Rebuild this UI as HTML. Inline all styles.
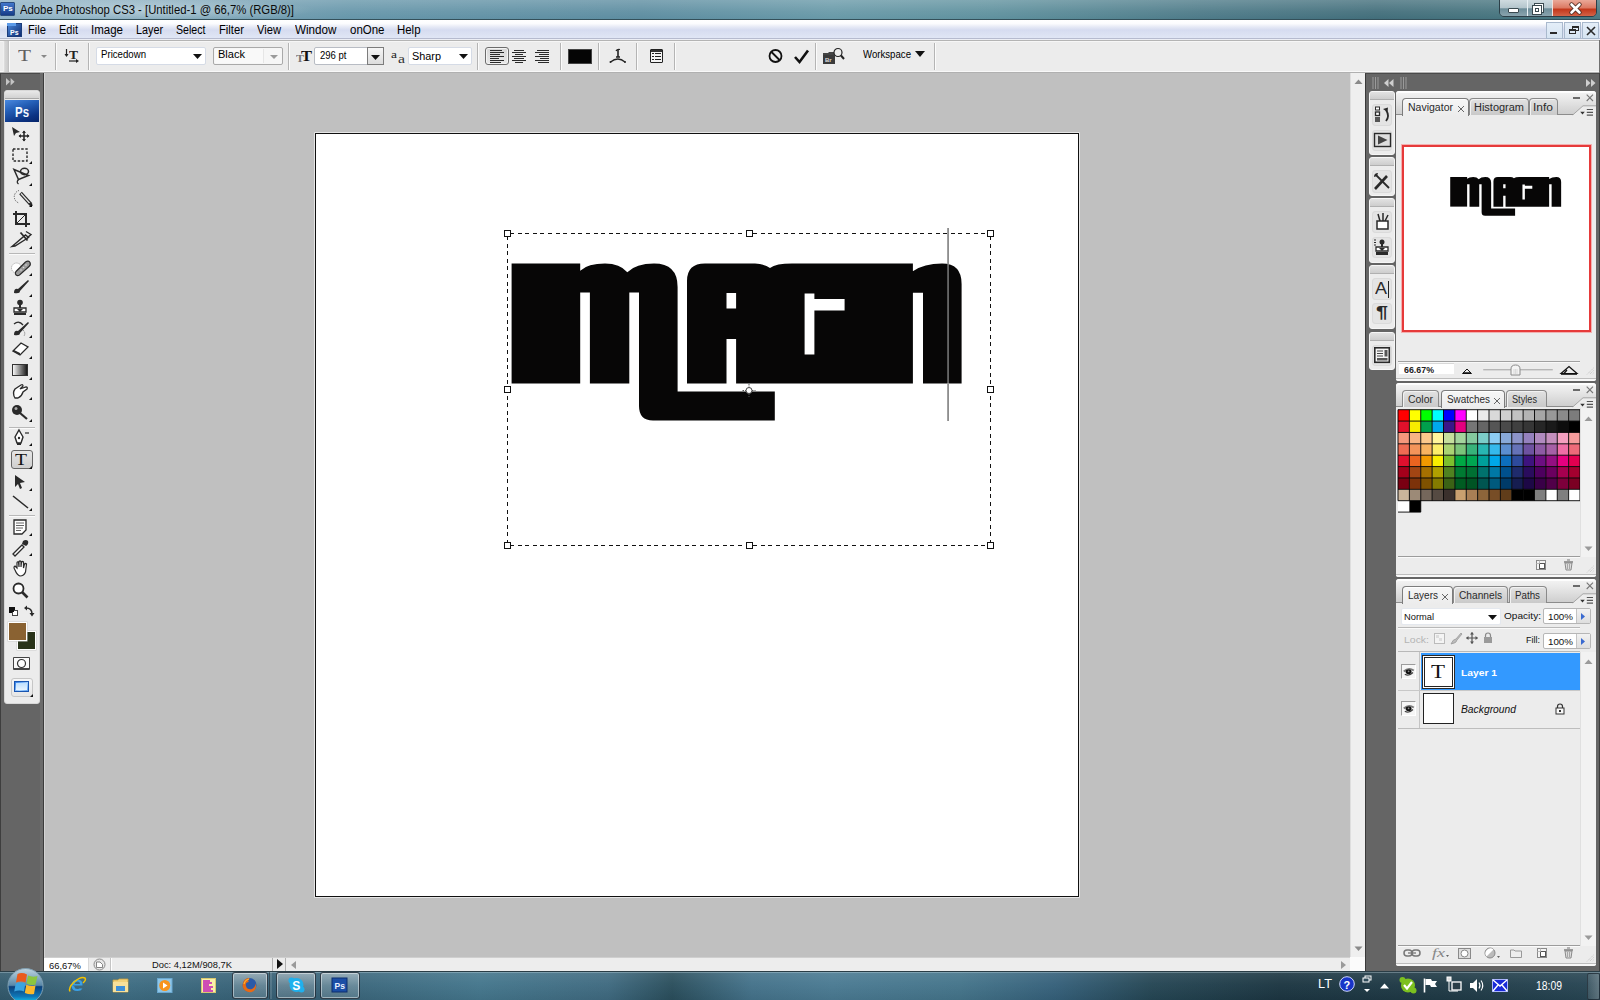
<!DOCTYPE html><html><head><meta charset="utf-8"><style>
*{margin:0;padding:0;box-sizing:border-box}
html,body{width:1600px;height:1000px;overflow:hidden;background:#c0c0c0;font-family:"Liberation Sans",sans-serif;position:relative}
.a{position:absolute}
.t{position:absolute;white-space:nowrap;line-height:1;color:#000}
svg{position:absolute;overflow:visible}
</style></head><body>
<div class="a" style="left:0px;top:0px;width:1600px;height:20px;background:linear-gradient(90deg,#8fb2c5 0%,#7ea5b8 10%,#6394a8 22%,#5a8b9f 40%,#6597a6 52%,#5c8f9c 62%,#4a7886 75%,#3e6b78 86%,#46767f 100%)"></div>
<div class="a" style="left:0px;top:0px;width:1600px;height:19px;background:linear-gradient(rgba(255,255,255,0.22),rgba(255,255,255,0.08) 60%,rgba(255,255,255,0.02))"></div>
<div class="a" style="left:0px;top:0px;width:320px;height:19px;background:radial-gradient(ellipse 160px 12px at 155px 10px,rgba(235,245,250,0.45),rgba(235,245,250,0) 100%)"></div>
<div class="a" style="left:0px;top:19px;width:1600px;height:1px;background:#34505a"></div>
<div class="a" style="left:0px;top:2px;width:15px;height:14px;background:linear-gradient(#4277cc,#163c88);border:1px solid #2a4c80;border-radius:1px"></div>
<div class="t" style="left:3px;top:5px;font-size:8px;color:#fff;font-weight:bold;">Ps</div>
<div class="t" style="left:20px;top:4px;font-size:12.5px;color:#0a0a0a;transform:scaleX(0.9039);transform-origin:0 0;">Adobe Photoshop CS3 - [Untitled-1 @ 66,7% (RGB/8)]</div>
<div class="a" style="left:1499px;top:-1px;width:98px;height:18px;border:1px solid #2c3f48;border-radius:0 0 5px 5px;overflow:hidden;"><div class="a" style="left:0;top:0;width:27px;height:17px;background:linear-gradient(#cfdbe0,#b5c6cd 45%,#6d8d99 52%,#8ea7b1)"></div><div class="a" style="left:27px;top:0;width:1px;height:17px;background:#e8f0f4"></div><div class="a" style="left:28px;top:0;width:24px;height:17px;background:linear-gradient(#cfdbe0,#b5c6cd 45%,#6d8d99 52%,#8ea7b1)"></div><div class="a" style="left:52px;top:0;width:1px;height:17px;background:#f0e0dc"></div><div class="a" style="left:53px;top:0;width:45px;height:17px;background:linear-gradient(#eaa898,#dc7a64 45%,#c3381c 55%,#d66a4e)"></div><div class="a" style="left:8px;top:8px;width:11px;height:5px;background:#fff;border:1px solid #3a4a50;border-radius:1px"></div><div class="a" style="left:34px;top:3px;width:10px;height:10px;background:#fff;border:1px solid #3a4a50"></div><div class="a" style="left:36px;top:5px;width:6px;height:6px;background:#3a4a50;border:1px solid #fff;outline:1px solid #fff"></div><div class="a" style="left:32px;top:5px;width:10px;height:10px;background:#fff;border:1px solid #3a4a50"></div><div class="a" style="left:35px;top:8px;width:4px;height:4px;border:1px solid #3a4a50"></div></div>
<svg style="left:1568px;top:2px" width="16" height="13"><path d="M3.5 2.5 L11.5 10.5 M11.5 2.5 L3.5 10.5" stroke="#4a2a20" stroke-width="4.4" stroke-linecap="round"/><path d="M3.5 2.5 L11.5 10.5 M11.5 2.5 L3.5 10.5" stroke="#fff" stroke-width="2.6" stroke-linecap="round"/></svg>
<div class="a" style="left:0px;top:20px;width:1600px;height:18px;background:linear-gradient(#ffffff 0%,#fbfcfe 20%,#e4e8f5 40%,#d6dcf0 55%,#e0e6f5 100%)"></div>
<div class="a" style="left:0px;top:38px;width:1600px;height:1px;background:#b6bbcf"></div>
<div class="a" style="left:0px;top:39px;width:1600px;height:1px;background:#eceef5"></div>
<div class="a" style="left:7px;top:23px;width:15px;height:14px;background:linear-gradient(135deg,#4a86d8,#0e2c72);border:1px solid #1b3c7a"></div>
<div class="a" style="left:7px;top:23px;width:9px;height:3px;background:#5c9ae8"></div>
<div class="t" style="left:10px;top:29px;font-size:7px;color:#fff;font-weight:bold;">Ps</div>
<div class="t" style="left:28px;top:24px;font-size:12px;color:#000;transform:scaleX(0.9305);transform-origin:0 0;">File</div>
<div class="t" style="left:59px;top:24px;font-size:12px;color:#000;transform:scaleX(0.9184);transform-origin:0 0;">Edit</div>
<div class="t" style="left:91px;top:24px;font-size:12px;color:#000;transform:scaleX(0.9593);transform-origin:0 0;">Image</div>
<div class="t" style="left:136px;top:24px;font-size:12px;color:#000;transform:scaleX(0.8991);transform-origin:0 0;">Layer</div>
<div class="t" style="left:176px;top:24px;font-size:12px;color:#000;transform:scaleX(0.8843);transform-origin:0 0;">Select</div>
<div class="t" style="left:219px;top:24px;font-size:12px;color:#000;transform:scaleX(0.9373);transform-origin:0 0;">Filter</div>
<div class="t" style="left:257px;top:24px;font-size:12px;color:#000;transform:scaleX(0.9303);transform-origin:0 0;">View</div>
<div class="t" style="left:294.5px;top:24px;font-size:12px;color:#000;transform:scaleX(0.9722);transform-origin:0 0;">Window</div>
<div class="t" style="left:349.5px;top:24px;font-size:12px;color:#000;transform:scaleX(0.9575);transform-origin:0 0;">onOne</div>
<div class="t" style="left:397px;top:24px;font-size:12px;color:#000;transform:scaleX(0.9519);transform-origin:0 0;">Help</div>
<div class="a" style="left:1546px;top:22px;width:17px;height:17px;background:linear-gradient(#e4eef8,#d6e4f2);border:1px solid #a9b9cd"></div>
<div class="a" style="left:1564px;top:22px;width:17px;height:17px;background:linear-gradient(#e4eef8,#d6e4f2);border:1px solid #a9b9cd"></div>
<div class="a" style="left:1582px;top:22px;width:17px;height:17px;background:linear-gradient(#e4eef8,#d6e4f2);border:1px solid #a9b9cd"></div>
<div class="a" style="left:1550px;top:32px;width:7px;height:2px;background:#2a2a2a"></div>
<div class="a" style="left:1569px;top:29px;width:7px;height:5px;border:1px solid #2a2a2a;border-top-width:2px;background:#dde8f4"></div>
<div class="a" style="left:1572px;top:26px;width:7px;height:5px;border:1px solid #2a2a2a;border-top-width:2px"></div>
<svg style="left:1586px;top:26px" width="10" height="10"><path d="M1 1 L9 9 M9 1 L1 9" stroke="#2a2a2a" stroke-width="1.6"/></svg>
<div class="a" style="left:0px;top:40px;width:1600px;height:33px;background:#ececec"></div>
<div class="a" style="left:0px;top:40px;width:1600px;height:1px;background:#b4b4b4"></div>
<div class="a" style="left:0px;top:41px;width:1600px;height:1px;background:#f6f6f6"></div>
<div class="a" style="left:0px;top:71px;width:1600px;height:1px;background:#f8f8f8"></div>
<div class="a" style="left:0px;top:72px;width:1600px;height:1px;background:#b0b0b0"></div>
<div class="a" style="left:1599px;top:40px;width:1px;height:33px;background:#707070"></div>
<div class="a" style="left:3px;top:41px;width:6px;height:31px;background:linear-gradient(90deg,#fafafa,#d6d6d6 30%,#d0d0d0 70%,#bdbdbd)"></div>
<div class="a" style="left:9px;top:41px;width:1px;height:31px;background:#fbfbfb"></div>
<div class="a" style="left:55px;top:43px;width:1px;height:27px;background:#b4b4b4;box-shadow:1px 0 0 #fbfbfb"></div>
<div class="a" style="left:88px;top:43px;width:1px;height:27px;background:#b4b4b4;box-shadow:1px 0 0 #fbfbfb"></div>
<div class="a" style="left:288px;top:43px;width:1px;height:27px;background:#b4b4b4;box-shadow:1px 0 0 #fbfbfb"></div>
<div class="a" style="left:477px;top:43px;width:1px;height:27px;background:#b4b4b4;box-shadow:1px 0 0 #fbfbfb"></div>
<div class="a" style="left:560px;top:43px;width:1px;height:27px;background:#b4b4b4;box-shadow:1px 0 0 #fbfbfb"></div>
<div class="a" style="left:598px;top:43px;width:1px;height:27px;background:#b4b4b4;box-shadow:1px 0 0 #fbfbfb"></div>
<div class="a" style="left:636px;top:43px;width:1px;height:27px;background:#b4b4b4;box-shadow:1px 0 0 #fbfbfb"></div>
<div class="a" style="left:674px;top:43px;width:1px;height:27px;background:#b4b4b4;box-shadow:1px 0 0 #fbfbfb"></div>
<div class="a" style="left:815px;top:43px;width:1px;height:27px;background:#b4b4b4;box-shadow:1px 0 0 #fbfbfb"></div>
<div class="a" style="left:934px;top:43px;width:1px;height:27px;background:#b4b4b4;box-shadow:1px 0 0 #fbfbfb"></div>
<div class="t" style="left:18px;top:47px;font-size:17px;color:#606060;font-family:'Liberation Serif',serif;transform:scaleX(1.2511);transform-origin:0 0;">T</div>
<svg style="left:41px;top:55px" width="6" height="4"><path d="M0 0 L6 0 L3 3Z" fill="#888"/></svg>
<div class="t" style="left:69px;top:48px;font-size:13px;color:#222;font-family:'Liberation Serif',serif;font-weight:bold;transform:scaleX(1.0378);transform-origin:0 0;">T</div>
<svg style="left:64px;top:48px" width="16" height="16"><path d="M2.5 1 V8" stroke="#222" stroke-width="1.2"/><path d="M0.5 6 L2.5 9 L4.5 6Z" fill="#222"/><path d="M5 13 H13" stroke="#222" stroke-width="1.2"/><path d="M12 11 L15 13 L12 15Z" fill="#222"/></svg>
<div class="a" style="left:96px;top:47px;width:110px;height:18px;background:#fff;border:1px solid #d5dbe6;border-radius:2px"></div>
<div class="t" style="left:101px;top:50px;font-size:10px;color:#000;transform:scaleX(0.9635);transform-origin:0 0;">Pricedown</div>
<svg style="left:193px;top:54px" width="9" height="5"><path d="M0 0 H9 L4.5 5Z" fill="#111"/></svg>
<div class="a" style="left:213px;top:47px;width:70px;height:18px;background:#f6f6f6;border:1px solid #a9a9a9;border-radius:2px"></div>
<div class="a" style="left:215px;top:49px;width:49px;height:14px;background:#f9f9f9;border-right:1px solid #e6e6e6"></div>
<div class="t" style="left:218px;top:50px;font-size:10px;color:#000;transform:scaleX(1.1042);transform-origin:0 0;">Black</div>
<svg style="left:270px;top:55px" width="8" height="4"><path d="M0 0 H8 L4 4Z" fill="#9a9a9a"/></svg>
<div class="t" style="left:296px;top:53px;font-size:11px;color:#777;font-family:'Liberation Serif',serif;font-weight:bold;transform:scaleX(1.0894);transform-origin:0 0;">T</div>
<div class="t" style="left:301px;top:49px;font-size:15px;color:#111;font-family:'Liberation Serif',serif;font-weight:bold;transform:scaleX(1.0983);transform-origin:0 0;">T</div>
<div class="a" style="left:314px;top:47px;width:70px;height:18px;background:#fff;border:1px solid #b8bcc4;border-radius:2px"></div>
<div class="a" style="left:367px;top:47px;width:17px;height:18px;background:linear-gradient(#f6f6f6,#dcdcdc);border:1px solid #7c7c7c"></div>
<div class="t" style="left:320px;top:50.5px;font-size:10px;color:#000;transform:scaleX(0.9528);transform-origin:0 0;">296 pt</div>
<svg style="left:371px;top:55px" width="9" height="5"><path d="M0 0 H9 L4.5 5Z" fill="#111"/></svg>
<div class="t" style="left:391px;top:49px;font-size:11px;color:#222;font-family:'Liberation Serif',serif;transform:scaleX(1.2268);transform-origin:0 0;">a</div>
<div class="t" style="left:398px;top:53px;font-size:12px;color:#333;font-family:'Liberation Serif',serif;transform:scaleX(1.3138);transform-origin:0 0;">a</div>
<div class="a" style="left:408px;top:47px;width:64px;height:18px;background:#fff;border:1px solid #d5dbe6;border-radius:2px"></div>
<div class="t" style="left:412px;top:51.5px;font-size:10px;color:#000;transform:scaleX(1.0867);transform-origin:0 0;">Sharp</div>
<svg style="left:459px;top:54px" width="9" height="5"><path d="M0 0 H9 L4.5 5Z" fill="#111"/></svg>
<div class="a" style="left:485px;top:47px;width:24px;height:18px;background:linear-gradient(#d8d8d8,#e8e8e8);border:1px solid #6c6c6c;border-radius:3px;box-shadow:inset 0 0 0 1px #f4f4f4"></div>
<div class="a" style="left:490px;top:50px;width:12px;height:1px;background:#2a2a2a"></div><div class="a" style="left:490px;top:52px;width:14px;height:1px;background:#2a2a2a"></div><div class="a" style="left:490px;top:54px;width:10px;height:1px;background:#2a2a2a"></div><div class="a" style="left:490px;top:56px;width:14px;height:1px;background:#2a2a2a"></div><div class="a" style="left:490px;top:58px;width:9px;height:1px;background:#2a2a2a"></div><div class="a" style="left:490px;top:60px;width:14px;height:1px;background:#2a2a2a"></div><div class="a" style="left:490px;top:62px;width:11px;height:1px;background:#2a2a2a"></div>
<div class="a" style="left:514.0px;top:50px;width:10px;height:1px;background:#2a2a2a"></div><div class="a" style="left:512.0px;top:52px;width:14px;height:1px;background:#2a2a2a"></div><div class="a" style="left:515.0px;top:54px;width:8px;height:1px;background:#2a2a2a"></div><div class="a" style="left:512.0px;top:56px;width:14px;height:1px;background:#2a2a2a"></div><div class="a" style="left:514.0px;top:58px;width:10px;height:1px;background:#2a2a2a"></div><div class="a" style="left:512.0px;top:60px;width:14px;height:1px;background:#2a2a2a"></div><div class="a" style="left:515.0px;top:62px;width:8px;height:1px;background:#2a2a2a"></div>
<div class="a" style="left:537px;top:50px;width:12px;height:1px;background:#2a2a2a"></div><div class="a" style="left:535px;top:52px;width:14px;height:1px;background:#2a2a2a"></div><div class="a" style="left:539px;top:54px;width:10px;height:1px;background:#2a2a2a"></div><div class="a" style="left:535px;top:56px;width:14px;height:1px;background:#2a2a2a"></div><div class="a" style="left:540px;top:58px;width:9px;height:1px;background:#2a2a2a"></div><div class="a" style="left:535px;top:60px;width:14px;height:1px;background:#2a2a2a"></div><div class="a" style="left:538px;top:62px;width:11px;height:1px;background:#2a2a2a"></div>
<div class="a" style="left:568px;top:49px;width:24px;height:15px;background:#050505;border:1px solid #444"></div>
<svg style="left:609px;top:48px" width="18" height="16"><path d="M7 3 Q8 1 11 1.5" stroke="#222" stroke-width="1.2" fill="none"/><path d="M9 2 V9 M7 9 H11" stroke="#222" stroke-width="1.6" fill="none"/><path d="M1.5 14 Q9 8 16 14" stroke="#222" stroke-width="1.3" fill="none"/><circle cx="1.5" cy="14" r="1" fill="#222"/><circle cx="16" cy="14" r="1" fill="#222"/></svg>
<div class="a" style="left:650px;top:49px;width:13px;height:14px;background:#f4f4f4;border:1.5px solid #222;border-radius:1px"></div>
<div class="a" style="left:651px;top:50px;width:11px;height:2px;background:#333"></div>
<div class="a" style="left:652px;top:53px;width:2px;height:1px;background:#222"></div>
<div class="a" style="left:655px;top:53px;width:6px;height:1px;background:#222"></div>
<div class="a" style="left:652px;top:56px;width:2px;height:1px;background:#222"></div>
<div class="a" style="left:655px;top:56px;width:6px;height:1px;background:#222"></div>
<div class="a" style="left:652px;top:59px;width:2px;height:1px;background:#222"></div>
<div class="a" style="left:655px;top:59px;width:6px;height:1px;background:#222"></div>
<svg style="left:767px;top:48px" width="18" height="16"><circle cx="8.5" cy="8" r="6" stroke="#111" stroke-width="1.8" fill="none"/><path d="M4.5 4 L12.5 12" stroke="#111" stroke-width="1.8"/></svg>
<svg style="left:794px;top:49px" width="16" height="15"><path d="M1 8 L5.5 13 L14 1.5" stroke="#111" stroke-width="2.6" fill="none"/></svg>
<svg style="left:822px;top:47px" width="24" height="18"><path d="M1 6 H6 L7 5 H13 V17 H1Z" fill="#444"/><rect x="1" y="8" width="12" height="9" fill="#3a3a3a"/><text x="3" y="15" font-size="6" fill="#ddd" font-family="Liberation Sans" font-weight="bold">Br</text><circle cx="16" cy="5.5" r="4" fill="#eee" stroke="#222" stroke-width="1.2"/><path d="M19 8.5 L22 12" stroke="#222" stroke-width="2"/></svg>
<div class="t" style="left:863px;top:49px;font-size:10.5px;color:#000;transform:scaleX(0.9173);transform-origin:0 0;">Workspace</div>
<svg style="left:915px;top:51px" width="10" height="6"><path d="M0 0 H10 L5 6Z" fill="#111"/></svg>
<div class="a" style="left:0px;top:73px;width:44px;height:898px;background:#656565;border-left:1px solid #3e3e3e;border-top:1px solid #4a4a4a"></div>
<div class="a" style="left:40px;top:73px;width:3px;height:898px;background:#6c6c6c"></div>
<div class="a" style="left:43px;top:73px;width:1px;height:898px;background:#3c3c3c"></div>
<svg style="left:5.5px;top:78px" width="10" height="8"><path d="M0 0 L4 3.8 L0 7.6Z M4.6 0 L8.6 3.8 L4.6 7.6Z" fill="#c4c4c4"/></svg>
<div class="a" style="left:4px;top:90px;width:36px;height:614px;background:#ececec;border-radius:3px 3px 3px 3px;border:1px solid #d8d8d8"></div>
<div class="a" style="left:5px;top:91px;width:34px;height:8px;background:linear-gradient(#e8e8e8,#d2d2d2);border-bottom:1px solid #a8a8a8;border-radius:2px 2px 0 0"></div>
<div class="a" style="left:5px;top:100px;width:34px;height:22px;background:linear-gradient(160deg,#4a8ae0 0%,#2560b8 35%,#0c3484 75%,#06246a 100%)"></div>
<div class="t" style="left:14.5px;top:103.5px;font-size:15px;color:#f4f8ff;font-weight:bold;transform:scaleX(0.7626);transform-origin:0 0;">Ps</div>
<div class="a" style="left:9px;top:253px;width:26px;height:1px;background:#b8b8b8;box-shadow:0 1px 0 #fafafa"></div>
<div class="a" style="left:9px;top:427px;width:26px;height:1px;background:#b8b8b8;box-shadow:0 1px 0 #fafafa"></div>
<div class="a" style="left:9px;top:515px;width:26px;height:1px;background:#b8b8b8;box-shadow:0 1px 0 #fafafa"></div>
<svg style="left:11px;top:126px" width="20" height="16"><path d="M1 1 L9 6 L5 7 L3 10Z" fill="#2a2a2a"/><path d="M13 5 V15 M8 10 H18" stroke="#2a2a2a" stroke-width="1.6"/><path d="M11 7 L13 4.5 L15 7Z M11 13 L13 15.5 L15 13Z M10 8 L7.5 10 L10 12Z M16 8 L18.5 10 L16 12Z" fill="#2a2a2a"/></svg>
<svg style="left:12px;top:148px" width="17" height="15"><rect x="1" y="1" width="14" height="12" fill="none" stroke="#2a2a2a" stroke-width="1.4" stroke-dasharray="2.5 1.6"/></svg>
<svg style="left:29px;top:161px" width="3" height="3"><path d="M3 0 V3 H0Z" fill="#111"/></svg>
<svg style="left:11px;top:166px" width="20" height="19"><path d="M3 3.5 L17.5 9.5 L7.5 13.5 Z" fill="none" stroke="#2a2a2a" stroke-width="1.5"/><ellipse cx="13.5" cy="5.5" rx="4" ry="3.2" fill="none" stroke="#2a2a2a" stroke-width="1.5"/><path d="M7.5 13.5 Q5 16 7.5 18" stroke="#2a2a2a" stroke-width="1.3" fill="none"/></svg>
<svg style="left:29px;top:183px" width="3" height="3"><path d="M3 0 V3 H0Z" fill="#111"/></svg>
<svg style="left:11px;top:188px" width="22" height="20"><path d="M8 2.5 A6.5 6.5 0 0 0 8 15" stroke="#555" stroke-width="1" stroke-dasharray="1.2 1.2" fill="none"/><path d="M9.5 5 L20 16.5" stroke="#2a2a2a" stroke-width="3.6"/><path d="M10 5.5 L19 15.5" stroke="#e6e6e6" stroke-width="1.2"/><path d="M18.5 15 L21 18" stroke="#2a2a2a" stroke-width="2.5"/></svg>
<svg style="left:29px;top:204px" width="3" height="3"><path d="M3 0 V3 H0Z" fill="#111"/></svg>
<svg style="left:12px;top:210px" width="19" height="18"><path d="M4 1 V14 H18 M1 4 H14 V17" stroke="#2a2a2a" stroke-width="2" fill="none"/><path d="M4 14 L14 4" stroke="#2a2a2a" stroke-width="1"/></svg>
<svg style="left:10px;top:229px" width="22" height="20"><path d="M2 17.5 L15.5 6 L18.5 8.5 L5 17Z" fill="#f2f2f2" stroke="#2a2a2a" stroke-width="1.4"/><path d="M10.5 3.5 L17.5 11.5" stroke="#2a2a2a" stroke-width="1.8"/><path d="M16 2.5 L21 5.5 L17 9" stroke="#2a2a2a" stroke-width="1.4" fill="none"/></svg>
<svg style="left:29px;top:246px" width="3" height="3"><path d="M3 0 V3 H0Z" fill="#111"/></svg>
<svg style="left:10px;top:258px" width="22" height="18"><circle cx="6.5" cy="10" r="5" fill="#fff" stroke="#888" stroke-width="0.8" stroke-dasharray="1 1"/><path d="M6 13.5 L15.5 4 Q18.5 2 20 4.5 Q21 7 19 8.5 L9.5 17 Q6.5 18.5 5.5 16 Q5 14.5 6 13.5Z" fill="#9a9a9a" stroke="#2a2a2a" stroke-width="1.2"/><circle cx="11" cy="12" r="0.8" fill="#ddd"/><circle cx="13.5" cy="9.5" r="0.8" fill="#ddd"/><circle cx="16" cy="7" r="0.8" fill="#ddd"/></svg>
<svg style="left:29px;top:273px" width="3" height="3"><path d="M3 0 V3 H0Z" fill="#111"/></svg>
<svg style="left:11px;top:279px" width="20" height="16"><path d="M3 14 Q3 9 7 10 L17 1 L18 2 L9 12 Q9 15 3 14Z" fill="#2a2a2a"/></svg>
<svg style="left:29px;top:294px" width="3" height="3"><path d="M3 0 V3 H0Z" fill="#111"/></svg>
<svg style="left:12px;top:299px" width="18" height="17"><circle cx="8" cy="3.5" r="2.8" fill="#2a2a2a"/><rect x="7" y="5" width="2" height="4" fill="#2a2a2a"/><path d="M2 9 H14 V13 H2Z" fill="#fff" stroke="#2a2a2a" stroke-width="1.3"/><path d="M5 10 L8 13 L11 10Z" fill="#2a2a2a"/><rect x="2" y="14" width="12" height="2" fill="#2a2a2a"/></svg>
<svg style="left:29px;top:314px" width="3" height="3"><path d="M3 0 V3 H0Z" fill="#111"/></svg>
<svg style="left:11px;top:320px" width="20" height="17"><path d="M3 15 Q3 10 7 11 L17 2 L18 3 L9 13 Q9 16 3 15Z" fill="#2a2a2a"/><path d="M3 4 Q8 0 12 5" stroke="#2a2a2a" stroke-width="1.3" fill="none"/><path d="M12 10 Q15 13 13 16" stroke="#666" stroke-width="1" stroke-dasharray="1 1" fill="none"/></svg>
<svg style="left:29px;top:335px" width="3" height="3"><path d="M3 0 V3 H0Z" fill="#111"/></svg>
<svg style="left:12px;top:342px" width="17" height="14"><path d="M1 9 L9 1 L16 5 L8 13Z" fill="#fff" stroke="#2a2a2a" stroke-width="1.3"/><path d="M1 9 L8 13 L8 11 L2 8" fill="#2a2a2a"/></svg>
<svg style="left:29px;top:356px" width="3" height="3"><path d="M3 0 V3 H0Z" fill="#111"/></svg>
<svg style="left:12px;top:364px" width="17" height="13"><defs><linearGradient id="gr1" x1="0" x2="1"><stop offset="0" stop-color="#fff"/><stop offset="1" stop-color="#111"/></linearGradient></defs><rect x="0.5" y="0.5" width="15" height="11" fill="url(#gr1)" stroke="#333"/></svg>
<svg style="left:29px;top:377px" width="3" height="3"><path d="M3 0 V3 H0Z" fill="#111"/></svg>
<svg style="left:11px;top:383px" width="20" height="17"><path d="M4 15 Q1 10 4 6 L10 2 Q12 1 12 3 L9 6 L15 4 Q17 4 16 6 L12 9 Q11 13 7 15Z" fill="#fff" stroke="#2a2a2a" stroke-width="1.3"/></svg>
<svg style="left:29px;top:397px" width="3" height="3"><path d="M3 0 V3 H0Z" fill="#111"/></svg>
<svg style="left:11px;top:404px" width="20" height="17"><circle cx="6" cy="6" r="5" fill="#2a2a2a"/><circle cx="5" cy="4.5" r="1.5" fill="#aaa"/><path d="M9 9 L16 15" stroke="#2a2a2a" stroke-width="2.2"/></svg>
<svg style="left:29px;top:419px" width="3" height="3"><path d="M3 0 V3 H0Z" fill="#111"/></svg>
<svg style="left:12px;top:429px" width="20" height="17"><path d="M7 1 L11 8 L9 14 H5 L3 8Z" fill="#fff" stroke="#2a2a2a" stroke-width="1.4"/><circle cx="7" cy="9" r="1.2" fill="#2a2a2a"/><path d="M5 14 H9 V16 H5Z" fill="#2a2a2a"/><path d="M13 4 H17" stroke="#2a2a2a" stroke-width="1.2"/></svg>
<svg style="left:29px;top:443px" width="3" height="3"><path d="M3 0 V3 H0Z" fill="#111"/></svg>
<div class="a" style="left:11px;top:450px;width:22px;height:19px;background:linear-gradient(#e6e6e6,#cfcfcf);border:1px solid #666;border-radius:3px"></div>
<div class="t" style="left:15px;top:452px;font-size:16px;color:#111;font-family:'Liberation Serif',serif;transform:scaleX(1.2268);transform-origin:0 0;">T</div>
<svg style="left:29px;top:466px" width="3" height="3"><path d="M3 0 V3 H0Z" fill="#111"/></svg>
<svg style="left:14px;top:474px" width="14" height="16"><path d="M1 1 L11 8 L6 9 L8 14 L6 15 L4 10 L1 13Z" fill="#2a2a2a"/></svg>
<svg style="left:29px;top:488px" width="3" height="3"><path d="M3 0 V3 H0Z" fill="#111"/></svg>
<svg style="left:11px;top:494px" width="20" height="16"><path d="M2 2 L17 14" stroke="#2a2a2a" stroke-width="1.6"/></svg>
<svg style="left:29px;top:508px" width="3" height="3"><path d="M3 0 V3 H0Z" fill="#111"/></svg>
<svg style="left:13px;top:519px" width="16" height="16"><path d="M1 1 H13 V11 L9 15 H1Z" fill="#fff" stroke="#2a2a2a" stroke-width="1.3"/><path d="M3 4 H11 M3 6.5 H11 M3 9 H10 M3 11.5 H8" stroke="#666" stroke-width="1"/></svg>
<svg style="left:29px;top:533px" width="3" height="3"><path d="M3 0 V3 H0Z" fill="#111"/></svg>
<svg style="left:11px;top:539px" width="20" height="17"><path d="M2 15 L11 6 L13 8 L4 17Z" fill="#fff" stroke="#2a2a2a" stroke-width="1.3"/><path d="M12 2 Q15 0 17 2 Q18 5 15 7 L11 5Z" fill="#2a2a2a"/></svg>
<svg style="left:29px;top:553px" width="3" height="3"><path d="M3 0 V3 H0Z" fill="#111"/></svg>
<svg style="left:12px;top:560px" width="18" height="17"><path d="M3 10 Q1 7 3 6 L5 8 V3 Q5 1.5 6.5 2 L7 7 V1.5 Q8 0.5 9 1.5 V7 L9.5 2 Q10.5 1 11.5 2 V8 L12.5 4 Q13.5 3 14.5 4 L13.5 12 Q12 16 8 16 Q5 15 3 10Z" fill="#fff" stroke="#2a2a2a" stroke-width="1.2"/></svg>
<svg style="left:12px;top:582px" width="18" height="17"><circle cx="6.5" cy="6.5" r="5" fill="#fff" stroke="#2a2a2a" stroke-width="1.8"/><path d="M10 10 L15.5 15.5" stroke="#2a2a2a" stroke-width="2.6"/></svg>
<div class="a" style="left:9px;top:607px;width:6px;height:6px;background:#111;border:1px solid #111"></div>
<div class="a" style="left:12px;top:610px;width:6px;height:6px;background:#fff;border:1px solid #444"></div>
<div class="a" style="left:9px;top:607px;width:5px;height:5px;background:#111"></div>
<svg style="left:24px;top:606px" width="11" height="11"><path d="M2 2 Q8 2 8 8" stroke="#2a2a2a" stroke-width="1.5" fill="none"/><path d="M0 2 L3 -0.5 L3 4.5Z M8 10.5 L5.5 7 H10.5Z" fill="#2a2a2a"/></svg>
<div class="a" style="left:17px;top:631px;width:19px;height:19px;background:#293319;border:1.5px solid #fff;box-shadow:0 0 0 0.5px #ccc"></div>
<div class="a" style="left:8px;top:622px;width:19px;height:19px;background:#8a6232;border:1.5px solid #fff;box-shadow:0 0 0 0.5px #ccc"></div>
<div class="a" style="left:13px;top:657px;width:17px;height:13px;background:#fafafa;border:1px solid #444;border-bottom-width:2px;border-radius:1px"></div>
<svg style="left:16px;top:658px" width="11" height="11"><circle cx="5.5" cy="5.5" r="4" fill="#fff" stroke="#333" stroke-width="1.2"/></svg>
<div class="a" style="left:11px;top:678px;width:22px;height:19px;background:linear-gradient(#f6f6f6,#e6e6e6);border:1px solid #c6c6c6;border-radius:3px"></div>
<div class="a" style="left:14px;top:681px;width:15px;height:11px;background:linear-gradient(135deg,#2f7ee8,#aad4ff 60%,#5aa0f0);border:1px solid #1a55b0"></div>
<div class="a" style="left:16px;top:683px;width:11px;height:7px;background:linear-gradient(#bfe0ff,#e8f4ff)"></div>
<svg style="left:30px;top:694px" width="3" height="3"><path d="M3 0 V3 H0Z" fill="#111"/></svg>
<div class="a" style="left:44px;top:73px;width:1306px;height:884px;background:#c0c0c0"></div>
<div class="a" style="left:44px;top:73px;width:1px;height:884px;background:#d4d4d4"></div>
<div class="a" style="left:314px;top:132px;width:766px;height:766px;background:#fff;border:1px solid #e6e6e6;border-radius:1px"></div>
<div class="a" style="left:315px;top:133px;width:764px;height:764px;background:#fff;border:1px solid #111"></div>
<svg style="left:0;top:0" width="1600" height="1000"><path fill="#070606" d="M511.6 263.5 H580.2 V383.6 H511.6Z"/><path fill="#070606" d="M579 292.5 V270.7 H580.2 Q588 263.6 605 263.6 Q620 263.6 627.3 272.3 Q636 263.6 654 263.6 Q677.6 263.6 677.6 287 V391.5 H774.8 V420.5 H653 Q639 420.5 639 406 V292.5 H629.3 V383.6 H589.9 V292.5 H579Z"/><path fill="#070606" fill-rule="evenodd" d="M687 383.6 V281 Q687 263.6 705 263.6 H755 Q765 264 770 268 Q776 263.6 792 263.6 H912.9 V271.3 Q924 263.6 942 263.6 Q961.6 263.6 961.6 284 V383.6 H923 V292.7 H912.9 V383.6 H736.1 V339 H726.5 V383.6 Z M726.5 292.9 H736.1 V308.6 H726.5Z M804.6 293.6 H814.4 V299 H844.6 V310.6 H814.4 V354.6 H804.6Z"/><rect x="947.5" y="228" width="1.1" height="36" fill="#444"/><rect x="947.5" y="264" width="1.1" height="120" fill="#a4a4a4"/><rect x="947.5" y="384" width="1.1" height="37" fill="#444"/></svg>
<div class="a" style="left:510px;top:233px;width:478px;height:1px;background:repeating-linear-gradient(90deg,#111 0 4px,transparent 4px 7.6px)"></div>
<div class="a" style="left:510px;top:545px;width:478px;height:1px;background:repeating-linear-gradient(90deg,#111 0 4px,transparent 4px 7.6px)"></div>
<div class="a" style="left:507px;top:236px;width:1px;height:307px;background:repeating-linear-gradient(180deg,#111 0 4px,transparent 4px 7.6px)"></div>
<div class="a" style="left:990px;top:236px;width:1px;height:307px;background:repeating-linear-gradient(180deg,#111 0 4px,transparent 4px 7.6px)"></div>
<div class="a" style="left:504.0px;top:230.0px;width:7px;height:7px;background:#fff;border:1px solid #111"></div>
<div class="a" style="left:504.0px;top:386.0px;width:7px;height:7px;background:#fff;border:1px solid #111"></div>
<div class="a" style="left:504.0px;top:542.0px;width:7px;height:7px;background:#fff;border:1px solid #111"></div>
<div class="a" style="left:745.5px;top:230.0px;width:7px;height:7px;background:#fff;border:1px solid #111"></div>
<div class="a" style="left:745.5px;top:542.0px;width:7px;height:7px;background:#fff;border:1px solid #111"></div>
<div class="a" style="left:987.0px;top:230.0px;width:7px;height:7px;background:#fff;border:1px solid #111"></div>
<div class="a" style="left:987.0px;top:386.0px;width:7px;height:7px;background:#fff;border:1px solid #111"></div>
<div class="a" style="left:987.0px;top:542.0px;width:7px;height:7px;background:#fff;border:1px solid #111"></div>
<svg style="left:742px;top:383px" width="15" height="15"><circle cx="7" cy="7.5" r="3" fill="#fff" stroke="#444" stroke-width="1"/><path d="M7 1 V4.5 M7 10.5 V14 M0.5 7.5 H4 M10 7.5 H13.5" stroke="#555" stroke-width="1" stroke-dasharray="1.5 1"/></svg>
<div class="a" style="left:1350px;top:73px;width:15px;height:884px;background:#efefef;border-left:1px solid #dedede"></div>
<svg style="left:1354px;top:79px" width="9" height="6"><path d="M0.5 5 L4.5 0.5 L8.5 5Z" fill="#8a8a8a"/></svg>
<svg style="left:1354px;top:946px" width="9" height="6"><path d="M0.5 0.5 L4.5 5 L8.5 0.5Z" fill="#8a8a8a"/></svg>
<div class="a" style="left:1365px;top:73px;width:235px;height:898px;background:#656565;border-left:1px solid #3a3a3a;border-top:1px solid #4a4a4a"></div>
<div class="a" style="left:1599px;top:73px;width:1px;height:898px;background:#3e3e3e"></div>
<svg style="left:1372px;top:77px" width="7" height="12"><path d="M1 0 V12 M3.5 0 V12 M6 0 V12" stroke="#a0a0a0" stroke-width="0.9"/></svg>
<svg style="left:1400px;top:77px" width="7" height="12"><path d="M1 0 V12 M3.5 0 V12 M6 0 V12" stroke="#a0a0a0" stroke-width="0.9"/></svg>
<svg style="left:1384px;top:79px" width="10" height="8"><path d="M4.5 0 L0 4 L4.5 8Z M9.5 0 L5 4 L9.5 8Z" fill="#cfcfcf"/></svg>
<svg style="left:1586px;top:79px" width="10" height="8"><path d="M0 0 L4.5 4 L0 8Z M5 0 L9.5 4 L5 8Z" fill="#cfcfcf"/></svg>
<div class="a" style="left:1369px;top:91px;width:26px;height:64px;background:#ececec;border-radius:3px;border:1px solid #f6f6f6"></div>
<div class="a" style="left:1370px;top:92px;width:24px;height:8px;background:linear-gradient(#e2e2e2,#cdcdcd);border-bottom:1px solid #b0b0b0;border-radius:2px 2px 0 0"></div>
<div class="a" style="left:1372px;top:104px;width:20px;height:22px;background:#e4e4e4;border-radius:4px;box-shadow:inset 0 0 0 1px #dadada"></div>
<div class="a" style="left:1372px;top:130px;width:20px;height:21px;background:#e4e4e4;border-radius:4px;box-shadow:inset 0 0 0 1px #dadada"></div>
<div class="a" style="left:1369px;top:157px;width:26px;height:39px;background:#ececec;border-radius:3px;border:1px solid #f6f6f6"></div>
<div class="a" style="left:1370px;top:158px;width:24px;height:8px;background:linear-gradient(#e2e2e2,#cdcdcd);border-bottom:1px solid #b0b0b0;border-radius:2px 2px 0 0"></div>
<div class="a" style="left:1372px;top:170px;width:20px;height:23px;background:#e4e4e4;border-radius:4px;box-shadow:inset 0 0 0 1px #dadada"></div>
<div class="a" style="left:1369px;top:198px;width:26px;height:65px;background:#ececec;border-radius:3px;border:1px solid #f6f6f6"></div>
<div class="a" style="left:1370px;top:199px;width:24px;height:8px;background:linear-gradient(#e2e2e2,#cdcdcd);border-bottom:1px solid #b0b0b0;border-radius:2px 2px 0 0"></div>
<div class="a" style="left:1372px;top:211px;width:20px;height:22px;background:#e4e4e4;border-radius:4px;box-shadow:inset 0 0 0 1px #dadada"></div>
<div class="a" style="left:1372px;top:237px;width:20px;height:21px;background:#e4e4e4;border-radius:4px;box-shadow:inset 0 0 0 1px #dadada"></div>
<div class="a" style="left:1369px;top:265px;width:26px;height:64px;background:#ececec;border-radius:3px;border:1px solid #f6f6f6"></div>
<div class="a" style="left:1370px;top:266px;width:24px;height:8px;background:linear-gradient(#e2e2e2,#cdcdcd);border-bottom:1px solid #b0b0b0;border-radius:2px 2px 0 0"></div>
<div class="a" style="left:1372px;top:278px;width:20px;height:22px;background:#e4e4e4;border-radius:4px;box-shadow:inset 0 0 0 1px #dadada"></div>
<div class="a" style="left:1372px;top:303px;width:20px;height:21px;background:#e4e4e4;border-radius:4px;box-shadow:inset 0 0 0 1px #dadada"></div>
<div class="a" style="left:1369px;top:332px;width:26px;height:38px;background:#ececec;border-radius:3px;border:1px solid #f6f6f6"></div>
<div class="a" style="left:1370px;top:333px;width:24px;height:8px;background:linear-gradient(#e2e2e2,#cdcdcd);border-bottom:1px solid #b0b0b0;border-radius:2px 2px 0 0"></div>
<div class="a" style="left:1372px;top:345px;width:20px;height:21px;background:#e4e4e4;border-radius:4px;box-shadow:inset 0 0 0 1px #dadada"></div>
<svg style="left:1374px;top:106px" width="18" height="18"><rect x="1.5" y="1" width="4" height="3" fill="#fff" stroke="#2a2a2a"/><rect x="1.5" y="6" width="4" height="3.5" fill="#fff" stroke="#2a2a2a" stroke-width="1.3"/><rect x="1" y="11" width="5" height="5" fill="#555"/><path d="M12 15 Q16 10 12 4" stroke="#2a2a2a" stroke-width="1.8" fill="none"/><path d="M9 3 L14 1.5 L13.5 6Z" fill="#2a2a2a"/></svg>
<svg style="left:1374px;top:133px" width="17" height="15"><rect x="0.5" y="0.5" width="16" height="13" fill="#ddd" stroke="#2a2a2a" stroke-width="1.4"/><path d="M4 2.5 L13.5 7 L4 11.5Z" fill="#444"/></svg>
<svg style="left:1373px;top:172px" width="19" height="19"><path d="M2 17 L14 4" stroke="#2a2a2a" stroke-width="2.6"/><path d="M3 3 L16 16" stroke="#2a2a2a" stroke-width="1.8"/><path d="M1 5 Q1 1 5 1 L4 4Z" fill="#2a2a2a"/></svg>
<svg style="left:1374px;top:213px" width="17" height="19"><path d="M4 1 L6 8 M9 0 V8 M14 2 L11 8" stroke="#2a2a2a" stroke-width="1.5"/><path d="M3 8 H14 V16 H3Z" fill="#fff" stroke="#2a2a2a" stroke-width="1.5"/></svg>
<svg style="left:1373px;top:239px" width="19" height="18"><path d="M1 1 H3 M1 3.5 H3 M1 6 H3" stroke="#2a2a2a"/><circle cx="9" cy="3" r="2.5" fill="#2a2a2a"/><rect x="8" y="5" width="2" height="3" fill="#2a2a2a"/><path d="M3 8 H15 V12 H3Z" fill="#fff" stroke="#2a2a2a" stroke-width="1.3"/><path d="M6 9 L9 12 L12 9Z" fill="#2a2a2a"/><rect x="3" y="13" width="12" height="3" fill="#2a2a2a"/></svg>
<div class="t" style="left:1375px;top:280px;font-size:17px;color:#2a2a2a;transform:scaleX(1.0579);transform-origin:0 0;">A</div>
<div class="a" style="left:1388px;top:281px;width:1px;height:17px;background:#222"></div>
<div class="t" style="left:1376px;top:304px;font-size:17px;color:#2a2a2a;font-weight:bold;transform:scaleX(1.2673);transform-origin:0 0;">&#182;</div>
<svg style="left:1374px;top:347px" width="17" height="17"><rect x="0.8" y="0.8" width="14.5" height="14.5" fill="#f4f4f4" stroke="#2a2a2a" stroke-width="1.6"/><path d="M3 4 H9 M3 6.5 H9 M3 9 H9" stroke="#444" stroke-width="1.1"/><rect x="10.5" y="3" width="3" height="6.5" fill="#555"/><rect x="3" y="11" width="10.5" height="2.5" fill="#555"/></svg>
<div class="a" style="left:1396px;top:91px;width:200px;height:290px;background:#ececec;border-radius:3px;box-shadow:inset 0 1px 0 #fff"></div>
<div class="a" style="left:1396px;top:92px;width:200px;height:23px;background:linear-gradient(#f2f2f2 0%,#e4e4e4 40%,#cdcdcd 100%);border-radius:3px 3px 0 0;border-top:1px solid #fdfdfd"></div>
<div class="a" style="left:1396px;top:114.4px;width:200px;height:1px;background:#8c8c8c"></div>
<svg style="left:1572px;top:105px" width="24" height="12"><path d="M0.8 9.899999999999999 L11 0.8 H24 V12 H0Z" fill="#ececec"/><path d="M0.8 9.899999999999999 L11 0.8 H24" stroke="#a6a6a6" stroke-width="1" fill="none"/></svg>
<div class="a" style="left:1396px;top:115.5px;width:200px;height:264px;background:#ececec"></div>
<div class="a" style="left:1396px;top:378px;width:200px;height:1px;background:#bdbdbd"></div>
<div class="a" style="left:1396px;top:379px;width:200px;height:2px;background:#f8f8f8;border-radius:0 0 3px 3px"></div>
<div class="a" style="left:1402px;top:98.3px;width:67px;height:18.099999999999998px;background:linear-gradient(#f6f6f6,#ececec);border:1px solid #7c7c7c;border-bottom:none;border-radius:4px 4px 0 0;box-shadow:inset 0 1px 0 #fff"></div>
<div class="t" style="left:1408px;top:102.6px;font-size:10px;color:#2a2a2a;transform:scaleX(1.0511);transform-origin:0 0;">Navigator</div>
<svg style="left:1457px;top:105px" width="8" height="8"><path d="M1 1 L7 7 M7 1 L1 7" stroke="#666" stroke-width="1"/></svg>
<div class="a" style="left:1469px;top:98.3px;width:60px;height:17.099999999999998px;background:linear-gradient(#e2e2e2,#c9c9c9);border:1px solid #8a8a8a;border-bottom:none;border-radius:4px 4px 0 0;box-shadow:inset 1px 1px 0 #f2f2f2"></div>
<div class="t" style="left:1474px;top:102.6px;font-size:10px;color:#2a2a2a;transform:scaleX(1.0970);transform-origin:0 0;">Histogram</div>
<div class="a" style="left:1529px;top:98.3px;width:29px;height:17.099999999999998px;background:linear-gradient(#e2e2e2,#c9c9c9);border:1px solid #8a8a8a;border-bottom:none;border-radius:4px 4px 0 0;box-shadow:inset 1px 1px 0 #f2f2f2"></div>
<div class="t" style="left:1533px;top:102.6px;font-size:10px;color:#2a2a2a;transform:scaleX(1.1985);transform-origin:0 0;">Info</div>
<div class="a" style="left:1573.2px;top:97px;width:7px;height:1.6px;background:#6a6a6a"></div>
<svg style="left:1585.5px;top:93.5px" width="8" height="8"><path d="M0.7 0.7 L7 7 M7 0.7 L0.7 7" stroke="#777" stroke-width="1.1"/></svg>
<svg style="left:1580px;top:108.5px" width="14" height="8"><path d="M0.2 2.7 H4.8 L2.5 5.5Z" fill="#333"/><path d="M6.8 0.5 H13 M6.8 3.3 H13 M6.8 6.1 H13" stroke="#555" stroke-width="1.2"/></svg>
<div class="a" style="left:1402px;top:145px;width:189px;height:187px;background:#fff;border:2px solid #e63a3a;box-shadow:0 0 0 1px #f3b0b0"></div>
<svg style="left:0;top:0" width="1600" height="1000"><g transform="translate(1402,145.1) scale(0.2465) translate(-316,-134)"><path fill="#070606" d="M511.6 263.5 H580.2 V383.6 H511.6Z"/><path fill="#070606" d="M579 292.5 V270.7 H580.2 Q588 263.6 605 263.6 Q620 263.6 627.3 272.3 Q636 263.6 654 263.6 Q677.6 263.6 677.6 287 V391.5 H774.8 V420.5 H653 Q639 420.5 639 406 V292.5 H629.3 V383.6 H589.9 V292.5 H579Z"/><path fill="#070606" fill-rule="evenodd" d="M687 383.6 V281 Q687 263.6 705 263.6 H755 Q765 264 770 268 Q776 263.6 792 263.6 H912.9 V271.3 Q924 263.6 942 263.6 Q961.6 263.6 961.6 284 V383.6 H923 V292.7 H912.9 V383.6 H736.1 V339 H726.5 V383.6 Z M726.5 292.9 H736.1 V308.6 H726.5Z M804.6 293.6 H814.4 V299 H844.6 V310.6 H814.4 V354.6 H804.6Z"/></g></svg>
<div class="a" style="left:1398px;top:361px;width:182px;height:1px;background:#a0a0a0;box-shadow:0 1px 0 #f8f8f8"></div>
<div class="a" style="left:1399px;top:363px;width:55px;height:11px;background:#fff;border-top:1px solid #d8d8d8"></div>
<div class="t" style="left:1404px;top:365.8px;font-size:9px;color:#222;font-weight:bold;transform:scaleX(0.9826);transform-origin:0 0;">66.67%</div>
<svg style="left:1462px;top:368px" width="10" height="6"><path d="M0.5 5.5 H9.5 L5 1Z" fill="none" stroke="#111" stroke-width="1"/><path d="M1 5 H9" stroke="#111" stroke-width="1.5"/></svg>
<div class="a" style="left:1483px;top:369px;width:70px;height:2px;background:#d6d6d6;border-top:1px solid #b6b6b6;border-radius:1px"></div>
<svg style="left:1510px;top:364px" width="11" height="12"><path d="M1 11 V5 Q1 1 5.5 1 Q10 1 10 5 V11Z" fill="#f4f4f4" stroke="#8a8a8a"/><path d="M4 5 V10 M5.5 5 V10 M7 5 V10" stroke="#c8c8c8" stroke-width="0.6"/></svg>
<svg style="left:1560px;top:365px" width="18" height="10"><path d="M1 8.5 H17 L9 1.5Z M4 8.5 L7 5" fill="none" stroke="#111" stroke-width="1.2"/><path d="M1 9 H17" stroke="#111" stroke-width="1.6"/></svg>
<svg style="left:1585px;top:366px" width="10" height="10"><path d="M9 1 V9 H1Z" fill="none"/><path d="M8.5 2 L2 8.5 M8.5 4.5 L4.5 8.5 M8.5 7 L7 8.5" stroke="#c0c0c0" stroke-width="1" stroke-dasharray="1 1"/></svg>
<div class="a" style="left:1396px;top:383px;width:200px;height:194px;background:#ececec;border-radius:3px;box-shadow:inset 0 1px 0 #fff"></div>
<div class="a" style="left:1396px;top:384px;width:200px;height:23px;background:linear-gradient(#f2f2f2 0%,#e4e4e4 40%,#cdcdcd 100%);border-radius:3px 3px 0 0;border-top:1px solid #fdfdfd"></div>
<div class="a" style="left:1396px;top:406.4px;width:200px;height:1px;background:#8c8c8c"></div>
<svg style="left:1572px;top:397px" width="24" height="12"><path d="M0.8 9.899999999999999 L11 0.8 H24 V12 H0Z" fill="#ececec"/><path d="M0.8 9.899999999999999 L11 0.8 H24" stroke="#a6a6a6" stroke-width="1" fill="none"/></svg>
<div class="a" style="left:1396px;top:407.5px;width:200px;height:168px;background:#ececec"></div>
<div class="a" style="left:1396px;top:574px;width:200px;height:1px;background:#bdbdbd"></div>
<div class="a" style="left:1396px;top:575px;width:200px;height:2px;background:#f8f8f8;border-radius:0 0 3px 3px"></div>
<div class="a" style="left:1402px;top:390.3px;width:37px;height:17.099999999999998px;background:linear-gradient(#e2e2e2,#c9c9c9);border:1px solid #8a8a8a;border-bottom:none;border-radius:4px 4px 0 0;box-shadow:inset 1px 1px 0 #f2f2f2"></div>
<div class="t" style="left:1408px;top:394.6px;font-size:10px;color:#2a2a2a;transform:scaleX(1.0458);transform-origin:0 0;">Color</div>
<div class="a" style="left:1441px;top:390.3px;width:64px;height:18.099999999999998px;background:linear-gradient(#f6f6f6,#ececec);border:1px solid #7c7c7c;border-bottom:none;border-radius:4px 4px 0 0;box-shadow:inset 0 1px 0 #fff"></div>
<div class="t" style="left:1447px;top:394.6px;font-size:10px;color:#2a2a2a;transform:scaleX(0.9917);transform-origin:0 0;">Swatches</div>
<svg style="left:1493px;top:397px" width="8" height="8"><path d="M1 1 L7 7 M7 1 L1 7" stroke="#666" stroke-width="1"/></svg>
<div class="a" style="left:1506px;top:390.3px;width:41px;height:17.099999999999998px;background:linear-gradient(#e2e2e2,#c9c9c9);border:1px solid #8a8a8a;border-bottom:none;border-radius:4px 4px 0 0;box-shadow:inset 1px 1px 0 #f2f2f2"></div>
<div class="t" style="left:1512px;top:394.6px;font-size:10px;color:#2a2a2a;transform:scaleX(0.9180);transform-origin:0 0;">Styles</div>
<div class="a" style="left:1573.2px;top:389px;width:7px;height:1.6px;background:#6a6a6a"></div>
<svg style="left:1585.5px;top:385.5px" width="8" height="8"><path d="M0.7 0.7 L7 7 M7 0.7 L0.7 7" stroke="#777" stroke-width="1.1"/></svg>
<svg style="left:1580px;top:400.5px" width="14" height="8"><path d="M0.2 2.7 H4.8 L2.5 5.5Z" fill="#333"/><path d="M6.8 0.5 H13 M6.8 3.3 H13 M6.8 6.1 H13" stroke="#555" stroke-width="1.2"/></svg>
<svg style="left:0;top:0" width="1600" height="1000"><rect x="1398.00" y="409.70" width="11.375" height="11.375" fill="#ff0000"/><rect x="1409.38" y="409.70" width="11.375" height="11.375" fill="#ffff00"/><rect x="1420.75" y="409.70" width="11.375" height="11.375" fill="#00ff00"/><rect x="1432.12" y="409.70" width="11.375" height="11.375" fill="#00ffff"/><rect x="1443.50" y="409.70" width="11.375" height="11.375" fill="#0000ff"/><rect x="1454.88" y="409.70" width="11.375" height="11.375" fill="#ff00ff"/><rect x="1466.25" y="409.70" width="11.375" height="11.375" fill="#ffffff"/><rect x="1477.62" y="409.70" width="11.375" height="11.375" fill="#ebebeb"/><rect x="1489.00" y="409.70" width="11.375" height="11.375" fill="#d9d9d9"/><rect x="1500.38" y="409.70" width="11.375" height="11.375" fill="#cfcfcf"/><rect x="1511.75" y="409.70" width="11.375" height="11.375" fill="#c2c2c2"/><rect x="1523.12" y="409.70" width="11.375" height="11.375" fill="#b4b4b4"/><rect x="1534.50" y="409.70" width="11.375" height="11.375" fill="#a6a6a6"/><rect x="1545.88" y="409.70" width="11.375" height="11.375" fill="#989898"/><rect x="1557.25" y="409.70" width="11.375" height="11.375" fill="#8a8a8a"/><rect x="1568.62" y="409.70" width="11.375" height="11.375" fill="#7c7c7c"/><rect x="1398.00" y="421.07" width="11.375" height="11.375" fill="#e0112b"/><rect x="1409.38" y="421.07" width="11.375" height="11.375" fill="#f7ec00"/><rect x="1420.75" y="421.07" width="11.375" height="11.375" fill="#00a04c"/><rect x="1432.12" y="421.07" width="11.375" height="11.375" fill="#00a8ec"/><rect x="1443.50" y="421.07" width="11.375" height="11.375" fill="#3b1589"/><rect x="1454.88" y="421.07" width="11.375" height="11.375" fill="#e4007f"/><rect x="1466.25" y="421.07" width="11.375" height="11.375" fill="#767676"/><rect x="1477.62" y="421.07" width="11.375" height="11.375" fill="#656565"/><rect x="1489.00" y="421.07" width="11.375" height="11.375" fill="#555555"/><rect x="1500.38" y="421.07" width="11.375" height="11.375" fill="#4a4a4a"/><rect x="1511.75" y="421.07" width="11.375" height="11.375" fill="#404040"/><rect x="1523.12" y="421.07" width="11.375" height="11.375" fill="#363636"/><rect x="1534.50" y="421.07" width="11.375" height="11.375" fill="#262626"/><rect x="1545.88" y="421.07" width="11.375" height="11.375" fill="#1a1a1a"/><rect x="1557.25" y="421.07" width="11.375" height="11.375" fill="#0d0d0d"/><rect x="1568.62" y="421.07" width="11.375" height="11.375" fill="#000000"/><rect x="1398.00" y="432.45" width="11.375" height="11.375" fill="#f5987c"/><rect x="1409.38" y="432.45" width="11.375" height="11.375" fill="#f8b484"/><rect x="1420.75" y="432.45" width="11.375" height="11.375" fill="#fbc98c"/><rect x="1432.12" y="432.45" width="11.375" height="11.375" fill="#fff59c"/><rect x="1443.50" y="432.45" width="11.375" height="11.375" fill="#c6df9d"/><rect x="1454.88" y="432.45" width="11.375" height="11.375" fill="#a4d49d"/><rect x="1466.25" y="432.45" width="11.375" height="11.375" fill="#84c99e"/><rect x="1477.62" y="432.45" width="11.375" height="11.375" fill="#7ccdc9"/><rect x="1489.00" y="432.45" width="11.375" height="11.375" fill="#8dcdf3"/><rect x="1500.38" y="432.45" width="11.375" height="11.375" fill="#88a9d9"/><rect x="1511.75" y="432.45" width="11.375" height="11.375" fill="#8c93c9"/><rect x="1523.12" y="432.45" width="11.375" height="11.375" fill="#9581be"/><rect x="1534.50" y="432.45" width="11.375" height="11.375" fill="#b08abf"/><rect x="1545.88" y="432.45" width="11.375" height="11.375" fill="#c48fbd"/><rect x="1557.25" y="432.45" width="11.375" height="11.375" fill="#f49fbf"/><rect x="1568.62" y="432.45" width="11.375" height="11.375" fill="#f59c9c"/><rect x="1398.00" y="443.82" width="11.375" height="11.375" fill="#ef6b53"/><rect x="1409.38" y="443.82" width="11.375" height="11.375" fill="#f3945a"/><rect x="1420.75" y="443.82" width="11.375" height="11.375" fill="#f7b360"/><rect x="1432.12" y="443.82" width="11.375" height="11.375" fill="#fcee6a"/><rect x="1443.50" y="443.82" width="11.375" height="11.375" fill="#aad373"/><rect x="1454.88" y="443.82" width="11.375" height="11.375" fill="#7bc47a"/><rect x="1466.25" y="443.82" width="11.375" height="11.375" fill="#38b27a"/><rect x="1477.62" y="443.82" width="11.375" height="11.375" fill="#29b6b2"/><rect x="1489.00" y="443.82" width="11.375" height="11.375" fill="#35b9ec"/><rect x="1500.38" y="443.82" width="11.375" height="11.375" fill="#5c8ed0"/><rect x="1511.75" y="443.82" width="11.375" height="11.375" fill="#6672b8"/><rect x="1523.12" y="443.82" width="11.375" height="11.375" fill="#6e52a0"/><rect x="1534.50" y="443.82" width="11.375" height="11.375" fill="#8d5aa4"/><rect x="1545.88" y="443.82" width="11.375" height="11.375" fill="#a660a6"/><rect x="1557.25" y="443.82" width="11.375" height="11.375" fill="#ef6ea6"/><rect x="1568.62" y="443.82" width="11.375" height="11.375" fill="#ed6b79"/><rect x="1398.00" y="455.20" width="11.375" height="11.375" fill="#e0102e"/><rect x="1409.38" y="455.20" width="11.375" height="11.375" fill="#ea6420"/><rect x="1420.75" y="455.20" width="11.375" height="11.375" fill="#f29a00"/><rect x="1432.12" y="455.20" width="11.375" height="11.375" fill="#faef00"/><rect x="1443.50" y="455.20" width="11.375" height="11.375" fill="#7dbf2e"/><rect x="1454.88" y="455.20" width="11.375" height="11.375" fill="#00a844"/><rect x="1466.25" y="455.20" width="11.375" height="11.375" fill="#00a651"/><rect x="1477.62" y="455.20" width="11.375" height="11.375" fill="#00a09a"/><rect x="1489.00" y="455.20" width="11.375" height="11.375" fill="#00a7e9"/><rect x="1500.38" y="455.20" width="11.375" height="11.375" fill="#0d6ebd"/><rect x="1511.75" y="455.20" width="11.375" height="11.375" fill="#2e4a9c"/><rect x="1523.12" y="455.20" width="11.375" height="11.375" fill="#3e137e"/><rect x="1534.50" y="455.20" width="11.375" height="11.375" fill="#6c0f82"/><rect x="1545.88" y="455.20" width="11.375" height="11.375" fill="#940f82"/><rect x="1557.25" y="455.20" width="11.375" height="11.375" fill="#e5007f"/><rect x="1568.62" y="455.20" width="11.375" height="11.375" fill="#e30050"/><rect x="1398.00" y="466.57" width="11.375" height="11.375" fill="#a4001b"/><rect x="1409.38" y="466.57" width="11.375" height="11.375" fill="#a24513"/><rect x="1420.75" y="466.57" width="11.375" height="11.375" fill="#a67000"/><rect x="1432.12" y="466.57" width="11.375" height="11.375" fill="#b0a100"/><rect x="1443.50" y="466.57" width="11.375" height="11.375" fill="#4f8220"/><rect x="1454.88" y="466.57" width="11.375" height="11.375" fill="#007a32"/><rect x="1466.25" y="466.57" width="11.375" height="11.375" fill="#007033"/><rect x="1477.62" y="466.57" width="11.375" height="11.375" fill="#00726d"/><rect x="1489.00" y="466.57" width="11.375" height="11.375" fill="#0078a6"/><rect x="1500.38" y="466.57" width="11.375" height="11.375" fill="#00508d"/><rect x="1511.75" y="466.57" width="11.375" height="11.375" fill="#1f2b6c"/><rect x="1523.12" y="466.57" width="11.375" height="11.375" fill="#2a0c5d"/><rect x="1534.50" y="466.57" width="11.375" height="11.375" fill="#4d005e"/><rect x="1545.88" y="466.57" width="11.375" height="11.375" fill="#6b005f"/><rect x="1557.25" y="466.57" width="11.375" height="11.375" fill="#a6004f"/><rect x="1568.62" y="466.57" width="11.375" height="11.375" fill="#a3002f"/><rect x="1398.00" y="477.95" width="11.375" height="11.375" fill="#7a0012"/><rect x="1409.38" y="477.95" width="11.375" height="11.375" fill="#7c320a"/><rect x="1420.75" y="477.95" width="11.375" height="11.375" fill="#7f5200"/><rect x="1432.12" y="477.95" width="11.375" height="11.375" fill="#847b00"/><rect x="1443.50" y="477.95" width="11.375" height="11.375" fill="#3b6215"/><rect x="1454.88" y="477.95" width="11.375" height="11.375" fill="#005c22"/><rect x="1466.25" y="477.95" width="11.375" height="11.375" fill="#005424"/><rect x="1477.62" y="477.95" width="11.375" height="11.375" fill="#005551"/><rect x="1489.00" y="477.95" width="11.375" height="11.375" fill="#005a7d"/><rect x="1500.38" y="477.95" width="11.375" height="11.375" fill="#003b69"/><rect x="1511.75" y="477.95" width="11.375" height="11.375" fill="#161d50"/><rect x="1523.12" y="477.95" width="11.375" height="11.375" fill="#1d0846"/><rect x="1534.50" y="477.95" width="11.375" height="11.375" fill="#390047"/><rect x="1545.88" y="477.95" width="11.375" height="11.375" fill="#510049"/><rect x="1557.25" y="477.95" width="11.375" height="11.375" fill="#7d003b"/><rect x="1568.62" y="477.95" width="11.375" height="11.375" fill="#7b0023"/><rect x="1398.00" y="489.32" width="11.375" height="11.375" fill="#cab59b"/><rect x="1409.38" y="489.32" width="11.375" height="11.375" fill="#9c8a77"/><rect x="1420.75" y="489.32" width="11.375" height="11.375" fill="#75675b"/><rect x="1432.12" y="489.32" width="11.375" height="11.375" fill="#554a42"/><rect x="1443.50" y="489.32" width="11.375" height="11.375" fill="#3a302c"/><rect x="1454.88" y="489.32" width="11.375" height="11.375" fill="#c9a06f"/><rect x="1466.25" y="489.32" width="11.375" height="11.375" fill="#a97f55"/><rect x="1477.62" y="489.32" width="11.375" height="11.375" fill="#8d653a"/><rect x="1489.00" y="489.32" width="11.375" height="11.375" fill="#774d26"/><rect x="1500.38" y="489.32" width="11.375" height="11.375" fill="#603d1a"/><rect x="1511.75" y="489.32" width="11.375" height="11.375" fill="#000000"/><rect x="1523.12" y="489.32" width="11.375" height="11.375" fill="#000000"/><rect x="1534.50" y="489.32" width="11.375" height="11.375" fill="#7f7f7f"/><rect x="1545.88" y="489.32" width="11.375" height="11.375" fill="#ffffff"/><rect x="1557.25" y="489.32" width="11.375" height="11.375" fill="#7f7f7f"/><rect x="1568.62" y="489.32" width="11.375" height="11.375" fill="#ffffff"/><rect x="1398" y="500.70" width="11.375" height="11.375" fill="#ffffff"/><rect x="1409.38" y="500.70" width="11.375" height="11.375" fill="#000"/><rect x="1397.50" y="409.7" width="1" height="91.00" fill="#000" opacity="0.9"/><rect x="1408.88" y="409.7" width="1" height="91.00" fill="#000" opacity="0.9"/><rect x="1420.25" y="409.7" width="1" height="91.00" fill="#000" opacity="0.9"/><rect x="1431.62" y="409.7" width="1" height="91.00" fill="#000" opacity="0.9"/><rect x="1443.00" y="409.7" width="1" height="91.00" fill="#000" opacity="0.9"/><rect x="1454.38" y="409.7" width="1" height="91.00" fill="#000" opacity="0.9"/><rect x="1465.75" y="409.7" width="1" height="91.00" fill="#000" opacity="0.9"/><rect x="1477.12" y="409.7" width="1" height="91.00" fill="#000" opacity="0.9"/><rect x="1488.50" y="409.7" width="1" height="91.00" fill="#000" opacity="0.9"/><rect x="1499.88" y="409.7" width="1" height="91.00" fill="#000" opacity="0.9"/><rect x="1511.25" y="409.7" width="1" height="91.00" fill="#000" opacity="0.9"/><rect x="1522.62" y="409.7" width="1" height="91.00" fill="#000" opacity="0.9"/><rect x="1534.00" y="409.7" width="1" height="91.00" fill="#000" opacity="0.9"/><rect x="1545.38" y="409.7" width="1" height="91.00" fill="#000" opacity="0.9"/><rect x="1556.75" y="409.7" width="1" height="91.00" fill="#000" opacity="0.9"/><rect x="1568.12" y="409.7" width="1" height="91.00" fill="#000" opacity="0.9"/><rect x="1579.50" y="409.7" width="1" height="91.00" fill="#000" opacity="0.9"/><rect x="1398" y="409.20" width="182.00" height="1" fill="#000" opacity="0.9"/><rect x="1398" y="420.57" width="182.00" height="1" fill="#000" opacity="0.9"/><rect x="1398" y="431.95" width="182.00" height="1" fill="#000" opacity="0.9"/><rect x="1398" y="443.32" width="182.00" height="1" fill="#000" opacity="0.9"/><rect x="1398" y="454.70" width="182.00" height="1" fill="#000" opacity="0.9"/><rect x="1398" y="466.07" width="182.00" height="1" fill="#000" opacity="0.9"/><rect x="1398" y="477.45" width="182.00" height="1" fill="#000" opacity="0.9"/><rect x="1398" y="488.82" width="182.00" height="1" fill="#000" opacity="0.9"/><rect x="1398" y="500.20" width="182.00" height="1" fill="#000" opacity="0.9"/><rect x="1398" y="511.58" width="22.75" height="1" fill="#000" opacity="0.9"/><rect x="1420.25" y="500.70" width="1" height="11.38" fill="#000" opacity="0.9"/></svg>
<div class="a" style="left:1580px;top:408px;width:16px;height:149px;background:#f2f2f2;border-left:1px solid #e0e0e0"></div>
<svg style="left:1584px;top:416px" width="9" height="6"><path d="M0.5 5 L4.5 0.5 L8.5 5Z" fill="#9a9a9a"/></svg>
<svg style="left:1584px;top:546px" width="9" height="6"><path d="M0.5 0.5 L4.5 5 L8.5 0.5Z" fill="#9a9a9a"/></svg>
<div class="a" style="left:1398px;top:556px;width:182px;height:1px;background:#9c9c9c;box-shadow:0 1px 0 #fafafa"></div>
<svg style="left:1536px;top:560px" width="11" height="11"><rect x="0.5" y="0.5" width="9" height="9" fill="#f4f4f4" stroke="#8a8a8a"/><rect x="3.5" y="3.5" width="5" height="5" fill="#fff" stroke="#555"/><path d="M3.5 0.5 V3.5 H0.5" stroke="#bbb" fill="none"/></svg>
<svg style="left:1563px;top:559px" width="11" height="12"><path d="M1 3 H10" stroke="#777" stroke-width="1.4"/><path d="M4 1 H7" stroke="#777"/><path d="M2 4 L3 11 H8 L9 4Z" fill="#ddd" stroke="#8a8a8a"/><path d="M4.5 5 V10 M6.5 5 V10" stroke="#999" stroke-width="0.8"/></svg>
<svg style="left:1585px;top:564px" width="10" height="10"><path d="M9 1 V9 H1Z" fill="none"/><path d="M8.5 2 L2 8.5 M8.5 4.5 L4.5 8.5 M8.5 7 L7 8.5" stroke="#c0c0c0" stroke-width="1" stroke-dasharray="1 1"/></svg>
<div class="a" style="left:1396px;top:579px;width:200px;height:387px;background:#ececec;border-radius:3px;box-shadow:inset 0 1px 0 #fff"></div>
<div class="a" style="left:1396px;top:580px;width:200px;height:23px;background:linear-gradient(#f2f2f2 0%,#e4e4e4 40%,#cdcdcd 100%);border-radius:3px 3px 0 0;border-top:1px solid #fdfdfd"></div>
<div class="a" style="left:1396px;top:602.4px;width:200px;height:1px;background:#8c8c8c"></div>
<svg style="left:1572px;top:593px" width="24" height="12"><path d="M0.8 9.899999999999999 L11 0.8 H24 V12 H0Z" fill="#ececec"/><path d="M0.8 9.899999999999999 L11 0.8 H24" stroke="#a6a6a6" stroke-width="1" fill="none"/></svg>
<div class="a" style="left:1396px;top:603.5px;width:200px;height:361px;background:#ececec"></div>
<div class="a" style="left:1396px;top:963px;width:200px;height:1px;background:#bdbdbd"></div>
<div class="a" style="left:1396px;top:964px;width:200px;height:2px;background:#f8f8f8;border-radius:0 0 3px 3px"></div>
<div class="a" style="left:1402px;top:586.3px;width:51px;height:18.099999999999998px;background:linear-gradient(#f6f6f6,#ececec);border:1px solid #7c7c7c;border-bottom:none;border-radius:4px 4px 0 0;box-shadow:inset 0 1px 0 #fff"></div>
<div class="t" style="left:1408px;top:590.6px;font-size:10px;color:#2a2a2a;transform:scaleX(0.9995);transform-origin:0 0;">Layers</div>
<svg style="left:1441px;top:593px" width="8" height="8"><path d="M1 1 L7 7 M7 1 L1 7" stroke="#666" stroke-width="1"/></svg>
<div class="a" style="left:1453px;top:586.3px;width:55px;height:17.099999999999998px;background:linear-gradient(#e2e2e2,#c9c9c9);border:1px solid #8a8a8a;border-bottom:none;border-radius:4px 4px 0 0;box-shadow:inset 1px 1px 0 #f2f2f2"></div>
<div class="t" style="left:1459px;top:590.6px;font-size:10px;color:#2a2a2a;transform:scaleX(1.0174);transform-origin:0 0;">Channels</div>
<div class="a" style="left:1509px;top:586.3px;width:38px;height:17.099999999999998px;background:linear-gradient(#e2e2e2,#c9c9c9);border:1px solid #8a8a8a;border-bottom:none;border-radius:4px 4px 0 0;box-shadow:inset 1px 1px 0 #f2f2f2"></div>
<div class="t" style="left:1515px;top:590.6px;font-size:10px;color:#2a2a2a;transform:scaleX(0.9774);transform-origin:0 0;">Paths</div>
<div class="a" style="left:1573.2px;top:585px;width:7px;height:1.6px;background:#6a6a6a"></div>
<svg style="left:1585.5px;top:581.5px" width="8" height="8"><path d="M0.7 0.7 L7 7 M7 0.7 L0.7 7" stroke="#777" stroke-width="1.1"/></svg>
<svg style="left:1580px;top:596.5px" width="14" height="8"><path d="M0.2 2.7 H4.8 L2.5 5.5Z" fill="#333"/><path d="M6.8 0.5 H13 M6.8 3.3 H13 M6.8 6.1 H13" stroke="#555" stroke-width="1.2"/></svg>
<div class="a" style="left:1401px;top:608px;width:100px;height:17px;background:#fff;border:1px solid #e4e8ee;border-radius:2px"></div>
<div class="t" style="left:1404px;top:611.5px;font-size:9.5px;color:#111;transform:scaleX(0.9796);transform-origin:0 0;">Normal</div>
<svg style="left:1488px;top:615px" width="9" height="5"><path d="M0 0 H9 L4.5 5Z" fill="#111"/></svg>
<div class="t" style="left:1504px;top:611.3px;font-size:9.8px;color:#111;transform:scaleX(1.0296);transform-origin:0 0;">Opacity:</div>
<div class="a" style="left:1543px;top:608px;width:48px;height:16px;background:#fff;border:1px solid #b6b6b6;border-radius:2px"></div>
<div class="a" style="left:1576px;top:609px;width:14px;height:14px;background:linear-gradient(#f2f2f2,#dedede);border-left:1px solid #c4c4c4"></div>
<svg style="left:1581px;top:613px" width="4" height="7"><path d="M0 0 L4 3.5 L0 7Z" fill="#3a6ad0"/></svg>
<div class="t" style="left:1548px;top:612px;font-size:9.5px;color:#111;transform:scaleX(1.0283);transform-origin:0 0;">100%</div>
<div class="a" style="left:1398px;top:627px;width:182px;height:1px;background:#b8b8b8;box-shadow:0 1px 0 #fafafa"></div>
<div class="t" style="left:1404px;top:635px;font-size:9.8px;color:#b4b4b4;transform:scaleX(1.0674);transform-origin:0 0;">Lock:</div>
<svg style="left:1434px;top:633px" width="11" height="11"><rect x="0.5" y="0.5" width="10" height="10" fill="#f4f4f4" stroke="#bbb"/><path d="M2 2 H5 V5 H2Z M5 5 H8 V8 H5Z" fill="#ddd"/></svg>
<svg style="left:1450px;top:632px" width="12" height="13"><path d="M1 12 Q3 7 6 7 L11 1 L12 2 L7 8 Q7 11 1 12Z" fill="#bdbdbd" stroke="#9a9a9a" stroke-width="0.8"/></svg>
<svg style="left:1466px;top:632px" width="12" height="12"><path d="M6 0.5 V11.5 M0.5 6 H11.5" stroke="#555" stroke-width="1.2"/><path d="M4 2.5 L6 0 L8 2.5Z M4 9.5 L6 12 L8 9.5Z M2.5 4 L0 6 L2.5 8Z M9.5 4 L12 6 L9.5 8Z" fill="#555"/></svg>
<svg style="left:1483px;top:632px" width="10" height="12"><path d="M2.5 5 V3.5 Q2.5 1 5 1 Q7.5 1 7.5 3.5 V5" fill="none" stroke="#8a8a8a" stroke-width="1.2"/><rect x="1" y="5" width="8" height="6" fill="#9a9a9a"/></svg>
<div class="t" style="left:1526px;top:635px;font-size:9.8px;color:#111;transform:scaleX(0.9180);transform-origin:0 0;">Fill:</div>
<div class="a" style="left:1543px;top:633px;width:48px;height:16px;background:#fff;border:1px solid #b6b6b6;border-radius:2px"></div>
<div class="a" style="left:1576px;top:634px;width:14px;height:14px;background:linear-gradient(#f2f2f2,#dedede);border-left:1px solid #c4c4c4"></div>
<svg style="left:1581px;top:638px" width="4" height="7"><path d="M0 0 L4 3.5 L0 7Z" fill="#3a6ad0"/></svg>
<div class="t" style="left:1548px;top:637px;font-size:9.5px;color:#111;transform:scaleX(1.0283);transform-origin:0 0;">100%</div>
<div class="a" style="left:1398px;top:651px;width:182px;height:1px;background:#b8b8b8"></div>
<div class="a" style="left:1398px;top:652px;width:182px;height:294px;background:#ececec"></div>
<div class="a" style="left:1421px;top:653px;width:159px;height:37px;background:#3399ff"></div>
<div class="a" style="left:1419px;top:652px;width:1px;height:76px;background:#c4c4c4"></div>
<div class="a" style="left:1398px;top:690px;width:182px;height:1px;background:#c8c8c8"></div>
<div class="a" style="left:1398px;top:728px;width:182px;height:1px;background:#bdbdbd"></div>
<div class="a" style="left:1401px;top:664px;width:15px;height:15px;background:#f6f6f6;border:1px solid #fff;border-top-color:#9c9c9c;border-left-color:#9c9c9c"></div>
<svg style="left:1403px;top:667px" width="12" height="10"><path d="M0.8 4.5 Q5.5 0.2 10.8 3.5" stroke="#7a7a7a" stroke-width="2" fill="none"/><ellipse cx="5.6" cy="4.8" rx="3" ry="2.3" fill="#111"/><circle cx="5.6" cy="4.3" r="0.9" fill="#8a8a8a"/><path d="M1.8 7.2 Q6 9.5 10 5.5" stroke="#444" stroke-width="1.2" fill="none"/></svg>
<div class="a" style="left:1401px;top:701px;width:15px;height:15px;background:#f6f6f6;border:1px solid #fff;border-top-color:#9c9c9c;border-left-color:#9c9c9c"></div>
<svg style="left:1403px;top:704px" width="12" height="10"><path d="M0.8 4.5 Q5.5 0.2 10.8 3.5" stroke="#7a7a7a" stroke-width="2" fill="none"/><ellipse cx="5.6" cy="4.8" rx="3" ry="2.3" fill="#111"/><circle cx="5.6" cy="4.3" r="0.9" fill="#8a8a8a"/><path d="M1.8 7.2 Q6 9.5 10 5.5" stroke="#444" stroke-width="1.2" fill="none"/></svg>
<div class="a" style="left:1421.5px;top:654.5px;width:33px;height:34px;background:#fff;border:1px solid #2a2a2a;box-shadow:inset 0 0 0 1px #fff,inset 0 0 0 2px #222"></div>
<div class="t" style="left:1431px;top:662px;font-size:19px;color:#111;font-family:'Liberation Serif',serif;transform:scaleX(1.2059);transform-origin:0 0;">T</div>
<div class="t" style="left:1461px;top:668.2px;font-size:9.8px;color:#fff;font-weight:bold;transform:scaleX(1.0487);transform-origin:0 0;">Layer 1</div>
<div class="a" style="left:1423px;top:693px;width:31px;height:31px;background:#fff;border:1.5px solid #222"></div>
<div class="t" style="left:1461px;top:704.8px;font-size:10.3px;color:#111;font-style:italic;transform:scaleX(1.0006);transform-origin:0 0;">Background</div>
<svg style="left:1555px;top:703px" width="10" height="11"><path d="M2.5 5 V3.5 Q2.5 1 5 1 Q7.5 1 7.5 3.5 V5" fill="none" stroke="#333" stroke-width="1.2"/><rect x="1" y="5" width="8" height="6" fill="#fafafa" stroke="#333" stroke-width="1"/><rect x="4" y="7" width="2" height="2" fill="#333"/></svg>
<div class="a" style="left:1580px;top:652px;width:16px;height:294px;background:#f2f2f2;border-left:1px solid #e0e0e0"></div>
<svg style="left:1584px;top:659px" width="9" height="6"><path d="M0.5 5 L4.5 0.5 L8.5 5Z" fill="#9a9a9a"/></svg>
<svg style="left:1584px;top:935px" width="9" height="6"><path d="M0.5 0.5 L4.5 5 L8.5 0.5Z" fill="#9a9a9a"/></svg>
<div class="a" style="left:1398px;top:945px;width:182px;height:1px;background:#9c9c9c;box-shadow:0 1px 0 #fafafa"></div>
<svg style="left:1403px;top:948px" width="19" height="10"><rect x="1" y="2" width="8" height="6" rx="3" fill="none" stroke="#777" stroke-width="1.5"/><rect x="9" y="2" width="8" height="6" rx="3" fill="none" stroke="#777" stroke-width="1.5"/><path d="M5 5 H13" stroke="#777" stroke-width="1.3"/></svg>
<div class="t" style="left:1432px;top:946px;font-size:13px;color:#888;font-family:'Liberation Serif',serif;font-style:italic;transform:scaleX(1.3844);transform-origin:0 0;">fx</div>
<svg style="left:1446px;top:955px" width="3" height="3"><path d="M0 0 H3 L1.5 2Z" fill="#666"/></svg>
<svg style="left:1458px;top:948px" width="14" height="11"><rect x="0.5" y="0.5" width="12" height="10" fill="#ddd" stroke="#8a8a8a"/><circle cx="6.5" cy="5.5" r="3.5" fill="#fff" stroke="#888"/></svg>
<svg style="left:1484px;top:947px" width="16" height="12"><circle cx="6" cy="6" r="5" fill="#bbb" stroke="#888"/><path d="M2.5 9.5 L9.5 2.5 A5 5 0 0 0 2.5 9.5Z" fill="#fff"/><path d="M13 9 H16 L14.5 11Z" fill="#666"/></svg>
<svg style="left:1510px;top:949px" width="12" height="9"><path d="M0.5 1 H4 L5 2 H11.5 V8.5 H0.5Z" fill="#eee" stroke="#999"/></svg>
<svg style="left:1537px;top:948px" width="11" height="11"><rect x="0.5" y="0.5" width="9" height="9" fill="#f4f4f4" stroke="#8a8a8a"/><rect x="3.5" y="3.5" width="5" height="5" fill="#fff" stroke="#555"/><path d="M3.5 0.5 V3.5 H0.5" stroke="#bbb" fill="none"/></svg>
<svg style="left:1563px;top:947px" width="11" height="12"><path d="M1 3 H10" stroke="#777" stroke-width="1.4"/><path d="M4 1 H7" stroke="#777"/><path d="M2 4 L3 11 H8 L9 4Z" fill="#ddd" stroke="#8a8a8a"/><path d="M4.5 5 V10 M6.5 5 V10" stroke="#999" stroke-width="0.8"/></svg>
<svg style="left:1585px;top:953px" width="10" height="10"><path d="M9 1 V9 H1Z" fill="none"/><path d="M8.5 2 L2 8.5 M8.5 4.5 L4.5 8.5 M8.5 7 L7 8.5" stroke="#c0c0c0" stroke-width="1" stroke-dasharray="1 1"/></svg>
<div class="a" style="left:44px;top:957px;width:1306px;height:14px;background:#ececec;border-top:1px solid #cfcfcf"></div>
<div class="a" style="left:44px;top:958px;width:44px;height:13px;background:#fff"></div>
<div class="t" style="left:49px;top:960.6px;font-size:9.5px;color:#111;transform:scaleX(0.9927);transform-origin:0 0;">66,67%</div>
<div class="a" style="left:88px;top:958px;width:1px;height:13px;background:#d8d8d8"></div>
<svg style="left:93px;top:958px" width="13" height="13"><circle cx="6.5" cy="6.5" r="5.5" fill="#e6e6e6" stroke="#8a8a8a" stroke-width="1"/><path d="M3.5 4 H7 L9.5 6.5 V9.5 H3.5Z" fill="#fff" stroke="#777" stroke-width="0.9"/></svg>
<div class="a" style="left:110px;top:958px;width:1px;height:13px;background:#c4c4c4;box-shadow:1px 0 0 #fff"></div>
<div class="t" style="left:152px;top:959.9px;font-size:9.5px;color:#111;transform:scaleX(0.9837);transform-origin:0 0;">Doc: 4,12M/908,7K</div>
<div class="a" style="left:272px;top:958px;width:1px;height:13px;background:#b0b0b0"></div>
<svg style="left:277px;top:959px" width="6" height="10"><path d="M0 0 L6 5 L0 10Z" fill="#111"/></svg>
<div class="a" style="left:285px;top:958px;width:1px;height:13px;background:#b0b0b0"></div>
<div class="a" style="left:286px;top:958px;width:1064px;height:13px;background:#ededed"></div>
<svg style="left:291px;top:961px" width="5" height="8"><path d="M5 0 L0 4 L5 8Z" fill="#9a9a9a"/></svg>
<svg style="left:1341px;top:961px" width="5" height="8"><path d="M0 0 L5 4 L0 8Z" fill="#9a9a9a"/></svg>
<div class="a" style="left:1350px;top:957px;width:15px;height:14px;background:#fbfbfb"></div>
<div class="a" style="left:0px;top:971px;width:1600px;height:29px;background:linear-gradient(90deg,#32596c 0%,#3d6c82 8%,#365f74 18%,#44768c 30%,#3f6a80 38%,#2a4e5c 42%,#44728a 47%,#4a7a92 52%,#44748a 60%,#35607a 66%,#254654 72%,#1c3642 80%,#1f3a46 90%,#284654 100%)"></div>
<div class="a" style="left:0px;top:971px;width:1600px;height:29px;background:linear-gradient(rgba(255,255,255,0.10),rgba(255,255,255,0.03) 45%,rgba(0,0,0,0.06))"></div>
<div class="a" style="left:0px;top:971px;width:1600px;height:1px;background:#2a3d46"></div>
<div class="a" style="left:0px;top:972px;width:1600px;height:1px;background:rgba(200,220,230,0.35)"></div>
<svg style="left:6px;top:966px" width="40" height="36"><defs><linearGradient id="orb" x1="0" y1="0" x2="0" y2="1"><stop offset="0" stop-color="#c0d4e0"/><stop offset="0.25" stop-color="#8aaec4"/><stop offset="0.48" stop-color="#5a88a8"/><stop offset="0.52" stop-color="#0a3f7a"/><stop offset="0.8" stop-color="#0f78b8"/><stop offset="1" stop-color="#18d8f8"/></linearGradient></defs><circle cx="19.5" cy="20" r="17.5" fill="url(#orb)" stroke="#7f9fb2" stroke-width="1"/><path d="M11.5 8 Q16 6 21 8.5 L19.5 16.5 Q15 14.5 10 16.5Z" fill="#ea5a1c"/><path d="M22 9.5 Q26.5 11.5 31.5 10 L29.5 18.5 Q25 20 20.5 17.5Z" fill="#8cc63f"/><path d="M9.7 17.5 Q14.5 15.5 19.3 17.8 L18 25.5 Q13.5 23.5 8.2 25.5Z" fill="#3aa4e0"/><path d="M20.3 18.8 Q25 21 29.5 19.5 L28 28 Q23.5 29 18.8 27Z" fill="#fbb92c"/></svg>
<svg style="left:68px;top:976px" width="20" height="18"><path d="M4 9.5 H14.5 Q15 3.5 9.5 3.5 Q4 3.5 3.5 9.5 Q3.5 15 9.5 15 Q13 15 14.5 12.5 H11 Q10.5 13 9.5 13 Q6.5 13 6.5 10.5Z M6.7 8 Q7 5.5 9.5 5.5 Q12 5.5 12 8Z" fill="#3aa0e8" fill-rule="evenodd"/><path d="M2 15.5 Q0 12 6 6 Q13 0 17 2 Q18.5 4 15 7" stroke="#f2c200" stroke-width="1.5" fill="none"/></svg>
<svg style="left:112px;top:977px" width="18" height="16"><path d="M1 3 H6 L7 2 H16 V15 H1Z" fill="#f2d27a" stroke="#c8a040" stroke-width="0.8"/><rect x="1" y="5" width="15" height="10" fill="#f7e09a"/><rect x="4" y="9" width="9" height="5" fill="#3d8fd8"/></svg>
<svg style="left:157px;top:978px" width="16" height="15"><rect x="0.5" y="0.5" width="14.5" height="14" fill="#8ec6e8" stroke="#6aa8d0"/><circle cx="7.75" cy="7.5" r="5.5" fill="#f7941d"/><path d="M6 4.5 L10.5 7.5 L6 10.5Z" fill="#fff"/></svg>
<svg style="left:201px;top:978px" width="15" height="15"><rect x="0.5" y="0.5" width="14" height="14" fill="#f8f0a8" stroke="#d8c870"/><path d="M2 3 H9 M2 5 H11 M2 7 H8 M2 9 H12 M2 11 H10 M2 13 H12" stroke="#c018b8" stroke-width="1.3"/></svg>
<div class="a" style="left:232px;top:972px;width:36px;height:27px;background:linear-gradient(rgba(255,255,255,0.42),rgba(255,255,255,0.22) 50%,rgba(255,255,255,0.14));border:1px solid rgba(20,30,40,0.75);border-radius:3px;box-shadow:inset 0 0 0 1px rgba(255,255,255,0.45)"></div>
<div class="a" style="left:276px;top:972px;width:40px;height:27px;background:linear-gradient(rgba(255,255,255,0.42),rgba(255,255,255,0.22) 50%,rgba(255,255,255,0.14));border:1px solid rgba(20,30,40,0.75);border-radius:3px;box-shadow:inset 0 0 0 1px rgba(255,255,255,0.45)"></div>
<div class="a" style="left:320px;top:972px;width:40px;height:27px;background:linear-gradient(rgba(255,255,255,0.42),rgba(255,255,255,0.22) 50%,rgba(255,255,255,0.14));border:1px solid rgba(20,30,40,0.75);border-radius:3px;box-shadow:inset 0 0 0 1px rgba(255,255,255,0.45)"></div>
<div class="a" style="left:269px;top:972px;width:3px;height:27px;background:rgba(255,255,255,0.12);border-left:1px solid rgba(0,0,0,0.4)"></div>
<svg style="left:241px;top:977px" width="17" height="16"><circle cx="8.5" cy="8" r="7" fill="#2a5aa8"/><path d="M2 6 Q3 1 9 1 Q6 3 8 5 Q4 5 5 9 Q6 13 11 12 Q15 10 14 6 Q17 12 11 15 Q3 16 1.5 9Z" fill="#e66a16"/><path d="M3 7 Q4 3 8 2" stroke="#f8b030" stroke-width="1.2" fill="none"/></svg>
<svg style="left:288px;top:977px" width="17" height="16"><circle cx="8.5" cy="8" r="7" fill="#1fb0ed"/><circle cx="3.5" cy="3.5" r="3" fill="#1fb0ed"/><circle cx="13.5" cy="12.5" r="3" fill="#1fb0ed"/><text x="4.2" y="12.5" font-size="12" font-weight="bold" font-family="Liberation Sans" fill="#fff">S</text></svg>
<svg style="left:332px;top:978px" width="16" height="15"><rect x="0" y="0" width="15" height="14" fill="#1b4ea6" stroke="#0c2e6e"/><text x="2.5" y="10.5" font-size="8.5" font-weight="bold" font-family="Liberation Sans" fill="#e8f0ff">Ps</text></svg>
<div class="t" style="left:1318px;top:977.5px;font-size:12.5px;color:#fff;transform:scaleX(1.0240);transform-origin:0 0;">LT</div>
<svg style="left:1339px;top:976px" width="16" height="16"><circle cx="8" cy="8" r="7.3" fill="#1834c8" stroke="#cfd8ff" stroke-width="1"/><text x="4.5" y="12.5" font-size="11" font-weight="bold" font-family="Liberation Sans" fill="#fff">?</text></svg>
<svg style="left:1362px;top:975px" width="11" height="18"><rect x="3" y="1" width="6" height="4" fill="none" stroke="#fff" stroke-width="1"/><rect x="1" y="3" width="6" height="4" fill="#2e4a58" stroke="#fff" stroke-width="1"/><path d="M2 14 H8 L5 17Z" fill="#fff"/></svg>
<svg style="left:1380px;top:983px" width="9" height="6"><path d="M0 5.5 L4.5 0.5 L9 5.5Z" fill="#fff"/></svg>
<svg style="left:1399px;top:977px" width="18" height="16"><circle cx="9" cy="8.5" r="7" fill="#7cc020"/><circle cx="3.5" cy="3" r="3" fill="#7cc020"/><circle cx="14.5" cy="13.5" r="3" fill="#7cc020"/><path d="M5 8 L8 11.5 L13 5" stroke="#fff" stroke-width="2.2" fill="none"/></svg>
<svg style="left:1423px;top:978px" width="15" height="15"><path d="M1.5 0.5 V14.5" stroke="#fff" stroke-width="1.6"/><path d="M2.5 1 H8 L9 3 H14 L12 6 L14 9 H8 L7 7 H2.5Z" fill="#fff"/></svg>
<svg style="left:1446px;top:976px" width="16" height="17"><rect x="1" y="1" width="4" height="4" fill="#ddd" stroke="#fff"/><path d="M3 5 V15 H12" stroke="#fff" stroke-width="1" fill="none"/><rect x="6" y="6" width="9" height="8" fill="#2a3e48" stroke="#fff" stroke-width="1.3"/></svg>
<svg style="left:1469px;top:978px" width="16" height="15"><path d="M1 5 H4 L8 1 V14 L4 10 H1Z" fill="#fff"/><path d="M10 4.5 Q12 7.5 10 10.5 M12 2.5 Q15.5 7.5 12 12.5" stroke="#fff" stroke-width="1.1" fill="none"/></svg>
<svg style="left:1492px;top:978px" width="16" height="15"><rect x="0.5" y="1.5" width="15" height="12" fill="#1a2ad8" stroke="#aab4ff"/><path d="M1 2 L8 8 L15 2 M1 13 L6 7 M15 13 L10 7" stroke="#fff" stroke-width="1.4" fill="none"/></svg>
<div class="t" style="left:1536px;top:980.4px;font-size:12.4px;color:#fff;transform:scaleX(0.8383);transform-origin:0 0;">18:09</div>
<div class="a" style="left:1587px;top:973px;width:13px;height:27px;background:linear-gradient(90deg,rgba(255,255,255,0.1),rgba(255,255,255,0.25));border:1px solid rgba(10,20,30,0.6);border-radius:2px"></div>
</body></html>
